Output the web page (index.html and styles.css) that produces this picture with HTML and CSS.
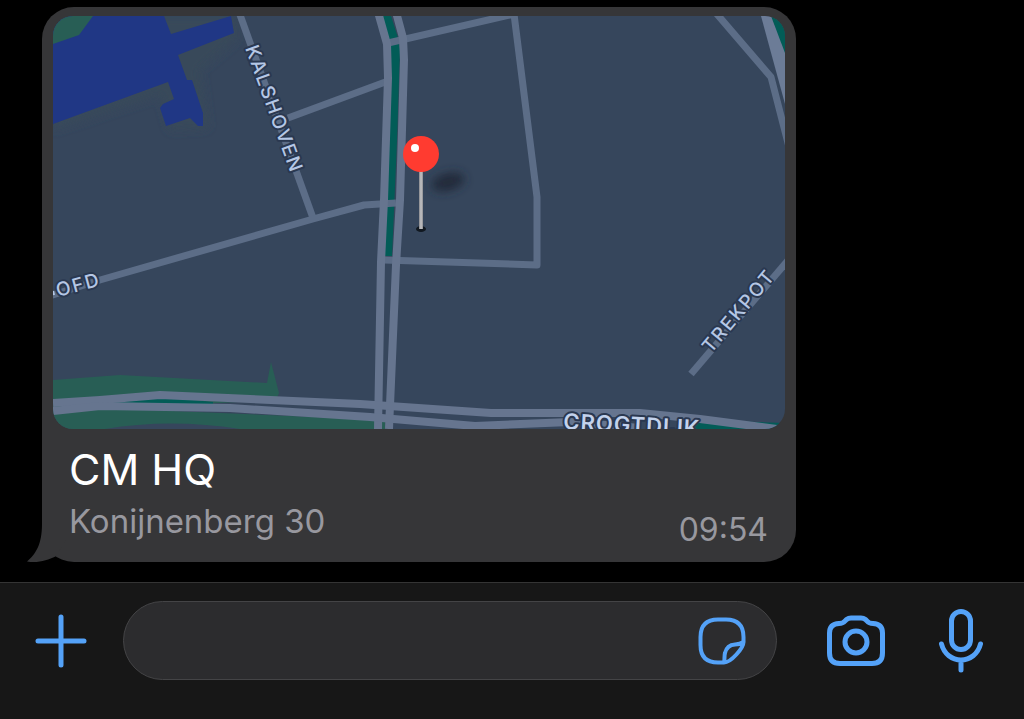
FILE: index.html
```html
<!DOCTYPE html>
<html lang="nl">
<head>
<meta charset="utf-8">
<meta name="viewport" content="width=device-width, initial-scale=1">
<title>Chat</title>
<link rel="stylesheet" href="styles.css">
</head>
<body class="chat">
<main class="conversation">
  <article class="bubble">
    <svg class="tail" viewBox="27 500 40 63" aria-hidden="true">
      <path d="M42 500V524C42 544 36 554 27 561.500C38 563.500 48 560 55.500 556.500L66 540V500Z"/>
    </svg>
    <svg class="map" viewBox="53 16 732 413" role="img" aria-label="Map with a pin at CM HQ">
      <defs>
        <linearGradient id="needle" x1="0" x2="1" y1="0" y2="0">
          <stop offset="0" stop-color="#85868a"/><stop offset=".5" stop-color="#c6c6c8"/><stop offset="1" stop-color="#8b8c90"/>
        </linearGradient>
        <filter id="soft" x="-60%" y="-80%" width="220%" height="260%"><feGaussianBlur stdDeviation="5"/></filter>
      </defs>
      <rect class="land" x="53" y="16" width="732" height="413"/>
      <path class="land-warm" d="M53 130L160 95L170 130L208 128L200 70L236 40L234 16H53Z" filter="url(#soft)"/>
      <path class="water" d="M53 16H164L171 34L231 16L234 33L178 55L187 80H192L203 113V126H198L190 118L166 126L160 108L163 104L174 99L168 82L53 124Z"/>
      <path class="park" d="M53 16H93L79 35L53 44Z"/>
      <path class="park" d="M53 380L120 375L267 383L271 362L279 393L276 400L53 412Z"/>
      <path class="park" d="M53 412L100 408L385 420V429H240Q170 418 105 429H53Z"/>
      <path class="verge" d="M108 403L160 397L213 402V408Z"/>
      <path class="verge" d="M382 16H391L398 38L400 50L397 140L392 256H384L389 140L390 60L389 40Z"/>
      <path class="verge" d="M771 16H785V56Z"/>
      <path class="verge" d="M675 429L700 420L785 423V429Z"/>
      <g class="road">
        <path d="M239 12L313 218"/>
        <path d="M288 118L388 81"/>
        <path d="M40 299L100 280L313 219L364 205L396 203"/>
        <path d="M388 43L514 14L537 197V265L384 260"/>
        <path d="M716 13L771 77L789 147"/>
        <path d="M691 374L790 258"/>
      </g>
      <g class="road road-main">
        <path d="M378 12L387 44L388 78L384 200L381 262L378 429"/>
        <path d="M396 12L403 38L404 60L400 200L396 265L389 429"/>
        <path d="M53 403L100 400L160 395L360 404L491 413H640L700 419L785 430"/>
        <path d="M53 411L100 406L230 408L370 417L475 426L570 422L640 428"/>
      </g>
      <path class="highway" d="M761 16H771L785 53V104Z"/>
      <text class="street" transform="translate(245 48) rotate(70)">KALSHOVEN</text>
      <text class="street" transform="translate(58 297) rotate(-15)">OFD</text>
      <path class="fragment" d="M53 291L54 295"/>
      <text class="street" transform="translate(711 354) rotate(-50)">TREKPOT</text>
      <text class="street street-main" transform="translate(563 429) rotate(3)">CROGTDIJK</text>
      <ellipse class="shadow" cx="448" cy="182" rx="17" ry="9" transform="rotate(-15 448 182)" filter="url(#soft)"/>
      <ellipse class="pin-hole" cx="421" cy="229" rx="5" ry="3"/>
      <rect class="pin-needle" x="419" y="168" width="4" height="61"/>
      <circle class="pin-head" cx="421" cy="154" r="18"/>
      <circle class="pin-shine" cx="415" cy="148" r="4"/>
    </svg>
    <div class="caption">
      <div class="place">
        <h1 class="place-name">CM HQ</h1>
        <p class="place-address">Konijnenberg 30</p>
      </div>
      <time class="sent" datetime="09:54">09:54</time>
    </div>
  </article>
</main>
<footer class="composer">
  <button class="action" type="button" aria-label="Add attachment">
    <svg class="icon" width="52" height="54" viewBox="0 0 52 54"><path d="M26 3V51M3 27H49" stroke-width="5"/></svg>
  </button>
  <div class="field">
    <input class="field-input" type="text" aria-label="Message">
    <button class="action" type="button" aria-label="Stickers">
      <svg class="icon" width="48" height="48" viewBox="0 0 48 48" stroke-width="4"><path d="M26 45.500H20Q2.500 45.500 2.500 28V20Q2.500 2.500 20 2.500H28Q45.500 2.500 45.500 20V25C45.500 31 33 45.500 26 45.500C27 42 26 39 27 36Q29 28 37 27.500Q42 27.500 45.500 25"/></svg>
    </button>
  </div>
  <div class="tools">
    <button class="action" type="button" aria-label="Camera">
      <svg class="icon" width="58" height="52" viewBox="0 0 58 52" stroke-width="5"><path d="M12 8.500Q16 8.500 18 6L19.500 4.500Q21.500 3 24 3H34Q36.500 3 38.500 4.500L40 6Q42 8.500 46 8.500Q55.500 9 55.500 18V38Q55.500 48.500 45 48.500H13Q2.500 48.500 2.500 38V18Q2.500 9 12 8.500Z"/><circle cx="29" cy="27" r="11"/></svg>
    </button>
    <button class="action" type="button" aria-label="Record voice message">
      <svg class="icon" width="44" height="66" viewBox="0 0 44 66" stroke-width="5"><rect x="12.500" y="3.500" width="19" height="38" rx="9.500"/><path d="M2.500 36C5 46 13 52 22 52S39 46 41.500 36M22 52V62"/></svg>
    </button>
  </div>
</footer>
</body>
</html>
```
FILE: styles.css
```css
* {
  box-sizing: border-box;
}

.chat {
  display: flex;
  flex-direction: column;
  min-height: 100vh;
  margin: 0;
  background: #000;
  font-family: Inter, "Liberation Sans", sans-serif;
}

.conversation {
  display: flex;
  flex: 1;
  flex-direction: column;
  justify-content: flex-end;
  padding: 7px 228px 20px 42px;
}

.bubble {
  position: relative;
  padding: 9px 11px 12px 11px;
  border-radius: 32px;
  background: #363638;
}

.tail {
  position: absolute;
  bottom: -1px;
  left: -15px;
  width: 40px;
  height: 63px;
  fill: #363638;
}

.map {
  position: relative;
  display: block;
  width: 100%;
  height: auto;
  border-radius: 20px;
}

.land { fill: #36465c; }
.land-warm { fill: #39495a; }
.water { fill: #203785; }
.park { fill: #285e55; }
.verge { fill: #025c57; }
.highway { fill: #6c7c97; }

.road {
  fill: none;
  stroke: #5c6d87;
  stroke-width: 7;
  stroke-linejoin: round;
}

.road-main {
  stroke: #66758f;
  stroke-width: 8;
}

.street {
  fill: #b5c7e5;
  stroke: #2a3850;
  stroke-width: 4;
  stroke-linejoin: round;
  paint-order: stroke;
  font-size: 19px;
  font-weight: 500;
  letter-spacing: 2px;
}

.street-main {
  fill: #c3d2ec;
  font-size: 22px;
  font-weight: 600;
  letter-spacing: 1px;
}

.fragment {
  stroke: #b5c7e5;
  stroke-width: 2;
}

.shadow { fill: #202b3a; }
.pin-hole { fill: #111820; }
.pin-needle { fill: url(#needle); }
.pin-head { fill: #ff3b30; }
.pin-shine { fill: #fff; }

.caption {
  position: relative;
  display: flex;
  align-items: flex-end;
  justify-content: space-between;
  gap: 16px;
  padding: 16px 17px 0 16px;
}

.place {
  padding-bottom: 9px;
}

.place-name {
  margin: 0 0 8px;
  color: #fff;
  font-size: 43px;
  font-weight: 400;
  line-height: 48px;
}

.place-address {
  margin: 0;
  color: #98989f;
  font-size: 33px;
  line-height: 40px;
}

.sent {
  color: #98989f;
  font-size: 32px;
  line-height: 40px;
}

.composer {
  display: flex;
  align-items: center;
  padding: 18px 41px 39px 35px;
  border-top: 1px solid #343434;
  background: #171717;
}

.action {
  display: flex;
  flex: none;
  padding: 0;
  border: 0;
  background: none;
  cursor: pointer;
}

.icon {
  display: block;
  fill: none;
  stroke: #54a2f8;
  stroke-linecap: round;
  stroke-linejoin: round;
}

.field {
  display: flex;
  flex: 1;
  align-items: center;
  height: 79px;
  margin: 0 50px 0 36px;
  padding: 0 30px;
  border: 1px solid #444446;
  border-radius: 40px;
  background: #2c2c2e;
}

.field-input {
  flex: 1;
  min-width: 0;
  height: 48px;
  padding: 0;
  border: 0;
  outline: 0;
  background: none;
  color: #fff;
  font: inherit;
  font-size: 33px;
}

.tools {
  display: flex;
  align-items: center;
  gap: 54px;
}
```
